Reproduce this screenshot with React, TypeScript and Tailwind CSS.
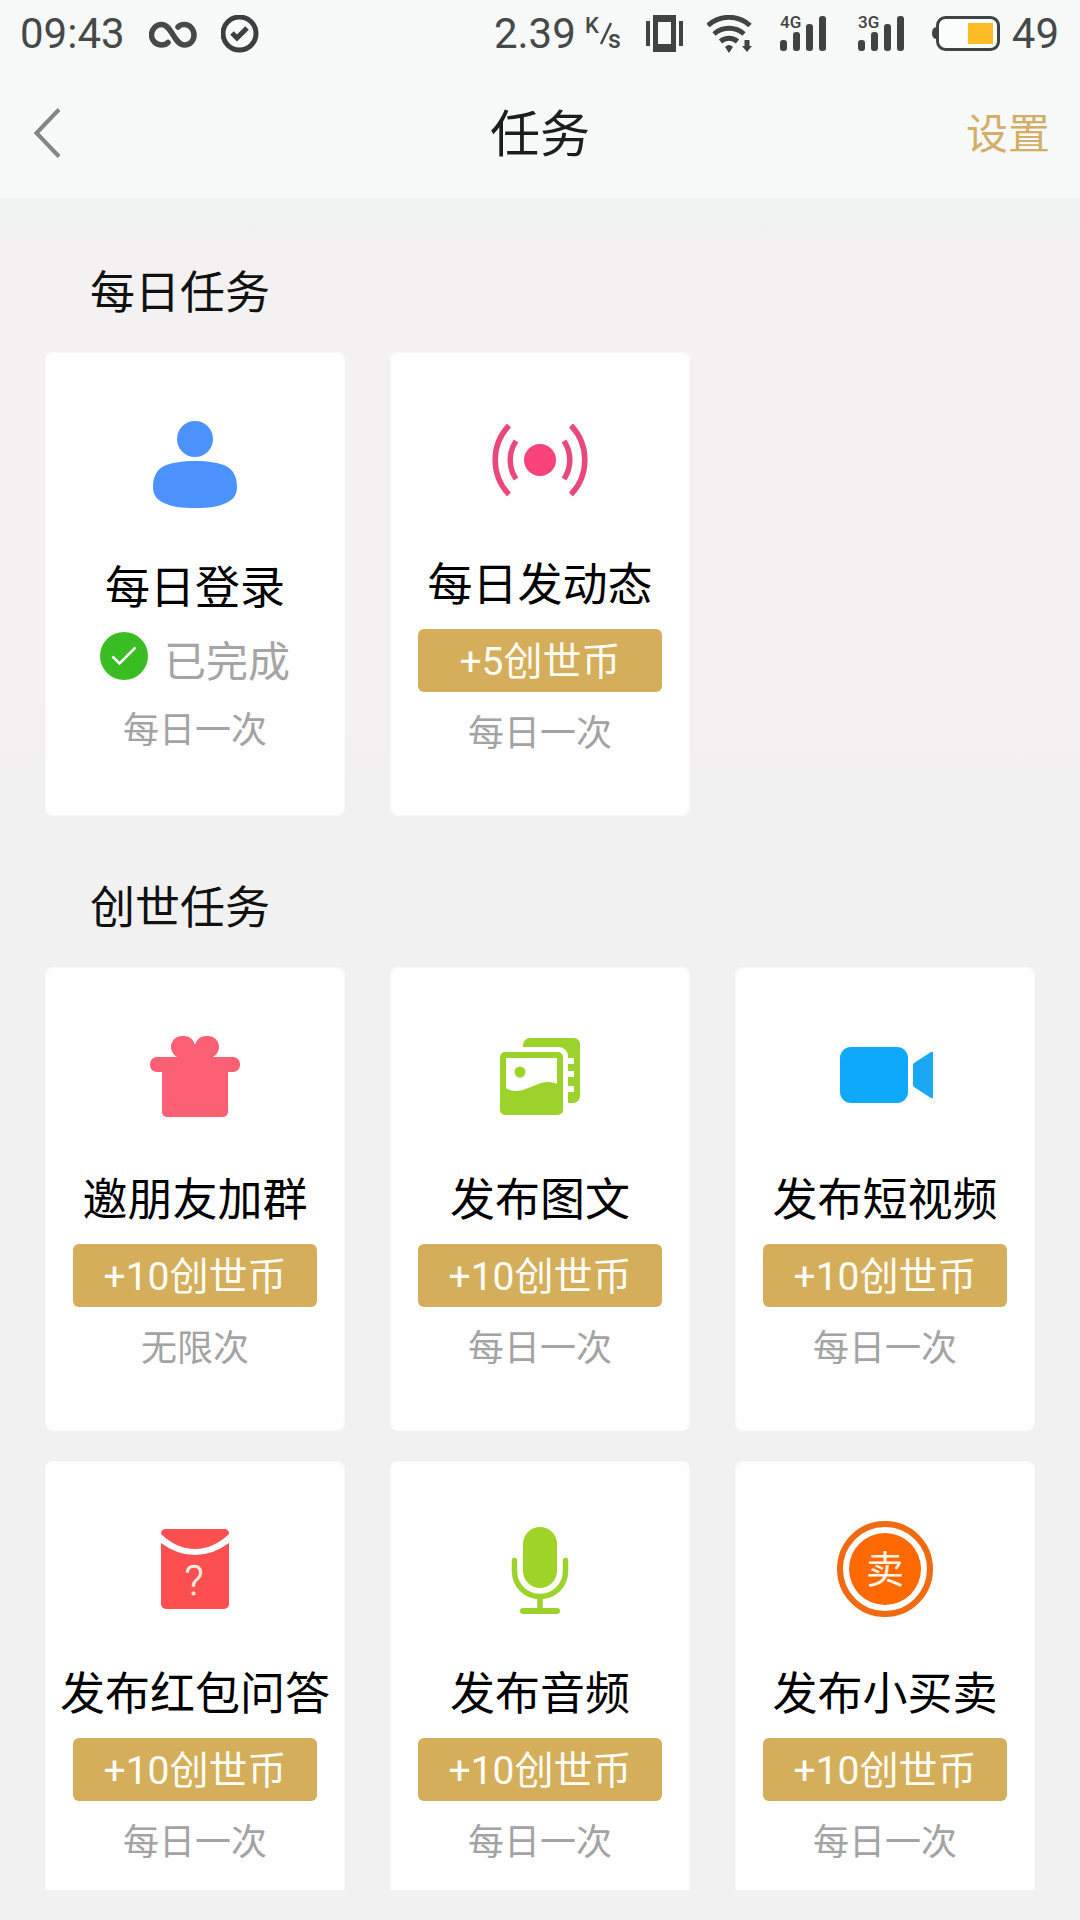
import type { ReactNode } from 'react';

type Task = {
  title: string;
  icon: ReactNode;
  reward?: string;
  limit: string;
};

/* ---------- task icons (96 x 96) ---------- */

function Icon({ children }: { children: ReactNode }) {
  return (
    <svg viewBox="0 0 96 96" className="w-24 h-24 shrink-0" fill="none" aria-hidden="true">
      {children}
    </svg>
  );
}

const UserIcon = (
  <Icon>
    <g fill="#4c92fd">
      <circle cx="48" cy="24" r="18" />
      <path d="M48 46c13 0 25 2 31 5 8 4 11 12 11 21 0 8-4 13-11 16-8 4-17 5-31 5s-23-1-31-5c-7-3-11-8-11-16 0-9 3-17 11-21 6-3 18-5 31-5z" />
    </g>
  </Icon>
);

const BroadcastIcon = (
  <Icon>
    <circle cx="48" cy="48" r="16" fill="#f74379" />
    <g stroke="#e8487a" strokeWidth="5.500">
      <path d="M17 13.500A50 50 0 0 0 17 82.500" />
      <path d="M79 13.500A50 50 0 0 1 79 82.500" />
      <path d="M24 29A34 34 0 0 0 24 67" />
      <path d="M72 29A34 34 0 0 1 72 67" />
    </g>
  </Icon>
);

const GiftIcon = (
  <Icon>
    <g fill="#fa5f73">
      <rect x="24" y="9" width="24" height="22" rx="11" />
      <rect x="48" y="9" width="24" height="22" rx="11" />
      <path d="M36 24l12-7 12 7v9H36z" />
      <rect x="3" y="30" width="90" height="15" rx="7" />
      <path d="M15 38h66v47a5 5 0 0 1-5 5H20a5 5 0 0 1-5-5z" />
    </g>
  </Icon>
);

const PictureIcon = (
  <Icon>
    <path
      fill="#9bd22b"
      d="M31 20v-2a7 7 0 0 1 7-7h44a6 6 0 0 1 6 6v52a7 7 0 0 1-7 7h-5V65h6v-6h-6v-9h6v-6h-6v-7h6v-6h-6v-2a9 9 0 0 0-9-9z"
    />
    <path
      fill="#9bd22b"
      fillRule="evenodd"
      d="M13 25h53a5 5 0 0 1 5 5v53a5 5 0 0 1-5 5H13a5 5 0 0 1-5-5V30a5 5 0 0 1 5-5zM14 31v30c4 3 10 4 17 2 9-3 17-8 25-8 4 0 7 1 9 2V31z"
    />
    <circle cx="28" cy="45" r="5.500" fill="#9bd22b" />
  </Icon>
);

const VideoIcon = (
  <Icon>
    <rect x="3" y="20" width="68" height="56" rx="11" fill="#0fa9fc" />
    <path d="M77 36l17-11q2-1 2 1v44q0 2-2 1L77 60q-1-1-1-2V38q0-1 1-2z" fill="#1aa7f3" />
  </Icon>
);

const RedPacketIcon = (
  <Icon>
    <g fill="#fd4f50">
      <path d="M19 8h58q5 0 5 5Q66 28 48 28T14 13q0-5 5-5z" />
      <path d="M14 22q16 12 34 12t34-12v61a5 5 0 0 1-5 5H19a5 5 0 0 1-5-5z" />
    </g>
    <text
      x="47"
      y="74"
      fontSize="42"
      textAnchor="middle"
      fill="#ffeee0"
      stroke="#ffeee0"
      strokeWidth="0.500"
      className="font-['Roboto',sans-serif] font-light"
    >
      ?
    </text>
  </Icon>
);

const MicIcon = (
  <Icon>
    <rect x="31" y="6" width="34" height="61" rx="17" fill="#9fd328" />
    <g stroke="#9bd22b" strokeLinecap="round">
      <path d="M22.500 39.500v11a25.500 25 0 0 0 51 0v-11" strokeWidth="5.500" />
      <path d="M48 77v12" strokeWidth="5.500" />
      <path d="M31 90h34" strokeWidth="6" />
    </g>
  </Icon>
);

const SellIcon = (
  <Icon>
    <circle cx="48" cy="48" r="45" stroke="#ef6a10" strokeWidth="6" />
    <circle cx="48" cy="48" r="36" fill="#fd6800" />
    <text x="48" y="62" fontSize="38" textAnchor="middle" fill="#fff3e6" className="font-['Noto_Sans_CJK_SC',sans-serif]">
      卖
    </text>
  </Icon>
);

/* ---------- data ---------- */

const dailyTasks: Task[] = [
  { title: '每日登录', icon: UserIcon, limit: '每日一次' },
  { title: '每日发动态', icon: BroadcastIcon, reward: '+5创世币', limit: '每日一次' },
];

const worldTasks: Task[] = [
  { title: '邀朋友加群', icon: GiftIcon, reward: '+10创世币', limit: '无限次' },
  { title: '发布图文', icon: PictureIcon, reward: '+10创世币', limit: '每日一次' },
  { title: '发布短视频', icon: VideoIcon, reward: '+10创世币', limit: '每日一次' },
  { title: '发布红包问答', icon: RedPacketIcon, reward: '+10创世币', limit: '每日一次' },
  { title: '发布音频', icon: MicIcon, reward: '+10创世币', limit: '每日一次' },
  { title: '发布小买卖', icon: SellIcon, reward: '+10创世币', limit: '每日一次' },
];

/* ---------- status bar ---------- */

function Signal({ label }: { label: string }) {
  return (
    <svg width="54" height="48" viewBox="0 -5 54 48" fill="#3f4342" aria-hidden="true">
      <text x="4" y="13" fontSize="17" className="font-['Roboto',sans-serif] font-medium">{label}</text>
      <rect x="4" y="25" width="7" height="11" rx="3" />
      <rect x="17" y="17" width="7" height="19" rx="3" />
      <rect x="30" y="9" width="7" height="27" rx="3" />
      <rect x="43" y="1" width="7" height="35" rx="3" />
    </svg>
  );
}

function StatusBar() {
  return (
    <div className="flex items-center justify-between h-[68px] pl-5 pr-[21px] text-[42px] leading-none text-[#454a49]">
      <div className="flex items-center gap-6">
        <span>09:43</span>
        <svg width="48" height="38" viewBox="0 0 48 38" fill="none" stroke="#454a49" strokeWidth="5.500" strokeLinecap="round" aria-hidden="true">
          <path d="M19 27.500c-2 2-4 2.500-6.500 2.500C7 30 2.500 25.500 2.500 20S7 9.500 12.500 9.500C23 9.500 25 30 35.500 30c5.500 0 9.500-4.500 9.500-10S41 9.500 35.500 9.500c-3 0-5 .5-6.500 2.500" />
        </svg>
        <svg width="38" height="38" viewBox="0 0 38 38" fill="none" stroke="#3a403f" aria-hidden="true">
          <circle cx="18.500" cy="18.500" r="16.500" strokeWidth="5" />
          <path d="M11 18l5 5 10-10" strokeWidth="5" />
        </svg>
      </div>

      <div className="flex items-center gap-6">
        <div className="flex items-center gap-1">
          <span>2.39</span>
          <svg width="42" height="48" viewBox="0 -2 42 48" fill="#454a49" aria-hidden="true">
            <text x="5" y="21" fontSize="22" className="font-['Roboto',sans-serif] font-medium">K</text>
            <path d="M31 11L21 32" stroke="#454a49" strokeWidth="2.500" />
            <text x="28" y="36" fontSize="25" className="font-['Roboto',sans-serif] font-medium">s</text>
          </svg>
        </div>

        {/* vibrate */}
        <svg width="37" height="38" viewBox="0 0 37 38" aria-hidden="true">
          <path fill="#3f4342" fillRule="evenodd" d="M7 0h23v37H7zM12 7v22h13V7z" />
          <path fill="#3f4342" d="M0 6h4v25H0zM33 6h4v25h-4z" />
        </svg>

        {/* wifi with download arrow */}
        <svg width="45" height="38" viewBox="0 0 45 38" fill="none" stroke="#3f4342" aria-hidden="true">
          <g strokeWidth="5">
            <path d="M1 10.500a31 31 0 0 1 42 0" />
            <path d="M7 19a22.500 22.500 0 0 1 30 0" />
            <path d="M13.500 26.500a13 13 0 0 1 17 0" />
          </g>
          <path d="M18 32q4-4 8 0l-4 6z" fill="#3f4342" stroke="none" />
          <path d="M37.500 25h5v6H45l-5 6-5-6h2.500z" fill="#3f4342" stroke="none" />
        </svg>

        <Signal label="4G" />
        <Signal label="3G" />

        <div className="flex items-center gap-3">
          <svg width="68" height="38" viewBox="0 0 68 38" fill="none" aria-hidden="true">
            <path d="M5 12v12q-5 0-5-6t5-6z" fill="#3f4342" />
            <rect x="5.500" y="2.500" width="61" height="32" rx="8" fill="#fbfdfc" stroke="#3f4342" strokeWidth="3" />
            <rect x="36" y="8" width="25" height="21" fill="#fdbb25" />
          </svg>
          <span>49</span>
        </div>
      </div>
    </div>
  );
}

function Header() {
  return (
    <header className="shrink-0 bg-[#f6f9f8]">
      <StatusBar />
      <div className="grid grid-cols-3 items-center h-[130px]">
        <button aria-label="返回" className="justify-self-start pl-[33px] pr-8">
          <svg width="28" height="50" viewBox="0 0 28 50" fill="none" stroke="#818584" strokeWidth="4" aria-hidden="true">
            <path d="M26 1.500L3.500 25 26 48.500" />
          </svg>
        </button>
        <h1 className="pt-1 text-center text-[50px] leading-[64px] text-[#1c1d1d]">任务</h1>
        <button className="justify-self-end pt-1 pr-[30px] text-[42px] leading-[64px] text-[#d3ae66]">设置</button>
      </div>
    </header>
  );
}

/* ---------- cards ---------- */

function TaskCard({ task }: { task: Task }) {
  return (
    <li className="flex flex-col items-center justify-center h-[464px] px-7 bg-[#fefefe] rounded-lg shadow-[inset_0_0_3px_#f3f3f3]">
      {task.icon}
      <h3 className="mt-[46px] text-[45px] leading-[64px] text-black whitespace-nowrap">{task.title}</h3>

      {task.reward ? (
        <button className="w-full h-[63px] mt-[11px] pt-1 rounded-md bg-[#d4ae5b] text-[39px] leading-[59px] text-[#fffdf5]">
          {task.reward}
        </button>
      ) : (
        <div className="flex gap-4 h-[57px] mt-[11px]">
          <svg width="48" height="48" viewBox="0 0 48 48" fill="none" aria-hidden="true">
            <circle cx="24" cy="24" r="24" fill="#3abd22" />
            <path d="M12.500 24.500l7 7L35.500 15.500" stroke="#fff" strokeWidth="2.500" />
          </svg>
          <span className="pt-1 text-[42px] leading-[54px] text-[#a5a5a5]">已完成</span>
        </div>
      )}

      <p className="mt-5 text-[36px] leading-[44px] text-[#a3a3a3]">{task.limit}</p>
    </li>
  );
}

function TaskSection({ title, tasks }: { title: string; tasks: Task[] }) {
  return (
    <section className="px-[45px]">
      <h2 className="pt-[61px] pb-[26px] pl-[45px] text-[45px] leading-[64px] text-[#111111]">{title}</h2>
      <ul className="grid grid-cols-3 gap-x-[45px] gap-y-[30px]">
        {tasks.map((task) => (
          <TaskCard key={task.title} task={task} />
        ))}
      </ul>
    </section>
  );
}

export default function App() {
  return (
    <div className="flex flex-col h-screen bg-[#f1f1f1] font-['Roboto','Noto_Sans_CJK_SC',sans-serif]">
      <Header />
      <main className="flex-1 min-h-0 mb-[30px] pt-[3px] overflow-y-auto [scrollbar-width:none] bg-[linear-gradient(#eff3f2,#f3f1f2_40px,#f3f1f2_500px,#f1f1f1_700px)]">
        <TaskSection title="每日任务" tasks={dailyTasks} />
        <TaskSection title="创世任务" tasks={worldTasks} />
      </main>
    </div>
  );
}
